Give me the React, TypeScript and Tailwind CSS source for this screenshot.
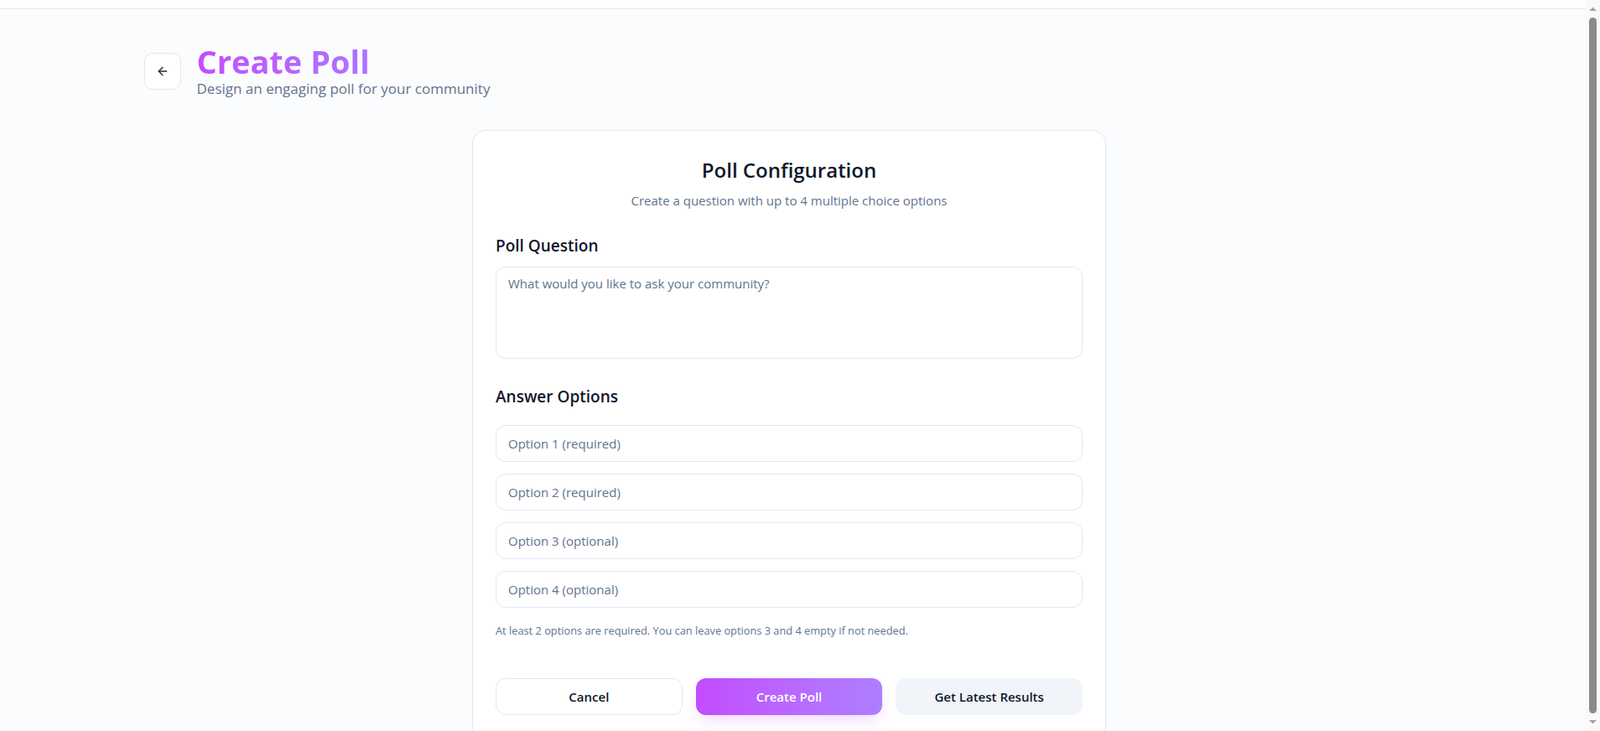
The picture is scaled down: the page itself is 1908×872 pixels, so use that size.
import { ArrowLeft } from "lucide-react";

const options = [
    "Option 1 (required)",
    "Option 2 (required)",
    "Option 3 (optional)",
    "Option 4 (optional)",
];

export default function App() {
    return (
        <div className="flex h-screen overflow-hidden bg-[#fbfcfd] font-['Open_Sans',sans-serif] text-slate-900">
            <div className="min-w-0 flex-1 overflow-hidden">
                {/* thin top bar */}
                <div className="h-[11px] bg-white border-b border-slate-200" />

                <div className="mx-auto max-w-[1548px] pt-[41px] pb-3">
                    {/* Header */}
                    <div className="flex items-center gap-[19px]">
                        <button className="flex h-11 w-11 shrink-0 items-center justify-center rounded-[10px] border border-slate-200 bg-white text-slate-800">
                            <ArrowLeft size={16} strokeWidth={2} />
                        </button>
                        <div>
                            <h1 className="w-fit bg-linear-to-r from-[#c44bff] to-[#ad74ff] bg-clip-text text-[38px] font-bold leading-[42px] text-transparent">
                                Create Poll
                            </h1>
                            <p className="text-[17px] leading-6 text-slate-500">Design an engaging poll for your community</p>
                        </div>
                    </div>

                    {/* Card */}
                    <div className="mt-[37px] flex justify-center pr-[9px]">
                        <div className="w-[756px] rounded-2xl border border-slate-200 bg-white px-[27px] pt-[31px] pb-7">
                            <div className="text-center">
                                <h2 className="text-[24px] font-semibold leading-8 text-slate-900">Poll Configuration</h2>
                                <p className="mt-[10px] text-[15px] leading-5 text-slate-500">
                                    Create a question with up to 4 multiple choice options
                                </p>
                            </div>

                            {/* Question */}
                            <div className="mt-[30px]">
                                <label className="block text-[19px] font-semibold leading-7 text-slate-900">Poll Question</label>
                                <textarea
                                    placeholder="What would you like to ask your community?"
                                    className="mt-[11px] block h-[110px] w-full resize-none rounded-xl border border-slate-200 bg-white px-[14px] pt-[7px] text-[15px] leading-6 outline-none placeholder:text-slate-500"
                                />
                            </div>

                            {/* Options */}
                            <div className="mt-[31px]">
                                <label className="block text-[19px] font-semibold leading-7 text-slate-900">Answer Options</label>
                                <div className="mt-5 flex flex-col gap-[14px]">
                                    {options.map((opt, i) => (
                                        <input
                                            key={i}
                                            placeholder={opt}
                                            className="h-11 w-full rounded-xl border border-slate-200 bg-white px-[14px] text-[15px] outline-none placeholder:text-slate-500"
                                        />
                                    ))}
                                </div>
                                <p className="mt-[19px] text-[12.8px] leading-4 text-slate-500">
                                    At least 2 options are required. You can leave options 3 and 4 empty if not needed.
                                </p>
                            </div>

                            {/* Actions */}
                            <div className="mt-[49px] grid grid-cols-3 gap-4">
                                <button className="h-11 rounded-xl border border-slate-200 bg-white text-[15px] font-semibold text-slate-900">
                                    Cancel
                                </button>
                                <button className="h-11 rounded-xl bg-linear-to-r from-[#c24bff] to-[#ad7fff] text-[15px] font-semibold text-white shadow-[0_8px_20px_-6px_rgba(192,76,255,0.3)]">
                                    Create Poll
                                </button>
                                <button className="h-11 rounded-xl bg-slate-100 text-[15px] font-semibold text-slate-900">
                                    Get Latest Results
                                </button>
                            </div>
                        </div>
                    </div>
                </div>
            </div>

            {/* window scrollbar */}
            <div className="flex w-[17px] shrink-0 flex-col items-center bg-[#f9f9f9]">
                <svg width="17" height="17" viewBox="0 0 17 17" className="shrink-0">
                    <path d="M4 13 L8.5 8.5 L13 13 Z" fill="#a3a3a3" />
                </svg>
                <div className="mt-[4px] mb-[4px] w-[9px] flex-1 rounded-full bg-[#8b8b8b]" />
                <svg width="17" height="17" viewBox="0 0 17 17" className="shrink-0">
                    <path d="M4 4 L8.5 8.5 L13 4 Z" fill="#a3a3a3" />
                </svg>
            </div>
        </div>
    );
}
